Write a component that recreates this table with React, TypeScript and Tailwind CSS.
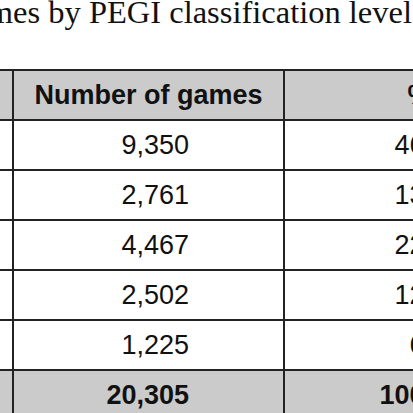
import React from "react";

const rows = [
  { label: "PEGI 3", n: "9,350", p: "46.0" },
  { label: "PEGI 7", n: "2,761", p: "13.6" },
  { label: "PEGI 12", n: "4,467", p: "22.0" },
  { label: "PEGI 16", n: "2,502", p: "12.3" },
  { label: "PEGI 18", n: "1,225", p: "6.0" },
];

export default function App() {
  return (
    <div className="w-[413px] h-[413px] overflow-hidden bg-white text-[#111]">
      <div
        className="flex justify-end whitespace-nowrap text-[32.5px] leading-[32px] mt-[-4px] pr-[1px]"
        style={{ fontFamily: '"Liberation Serif", serif' }}
      >
        <span className="shrink-0">Number of games by PEGI classification level</span>
      </div>
      <table
        className="table-fixed border-collapse ml-[-189px] mt-[41px] w-[743px] text-[27px]"
        style={{ fontFamily: '"Liberation Sans", Arial, sans-serif' }}
      >
        <colgroup>
          <col className="w-[201px]" />
          <col className="w-[271px]" />
          <col className="w-[271px]" />
        </colgroup>
        <thead>
          <tr className="bg-[#cbcbcb] h-[50px]">
            <th className="border-2 border-[#222] font-bold text-center">PEGI level</th>
            <th className="border-2 border-[#222] font-bold text-center">Number of games</th>
            <th className="border-2 border-[#222] font-bold text-center">%</th>
          </tr>
        </thead>
        <tbody>
          {rows.map((r) => (
            <tr key={r.label} className="h-[50px]">
              <td className="border-2 border-[#222] text-center">{r.label}</td>
              <td className="border-2 border-[#222] text-right pr-[94px]">{r.n}</td>
              <td className="border-2 border-[#222] text-right pr-[107px]">{r.p}</td>
            </tr>
          ))}
          <tr className="bg-[#cbcbcb] h-[50px] font-bold">
            <td className="border-2 border-[#222] text-center">Total</td>
            <td className="border-2 border-[#222] text-right pr-[94px]">20,305</td>
            <td className="border-2 border-[#222] text-right pr-[107px]">100.0</td>
          </tr>
        </tbody>
      </table>
    </div>
  );
}
